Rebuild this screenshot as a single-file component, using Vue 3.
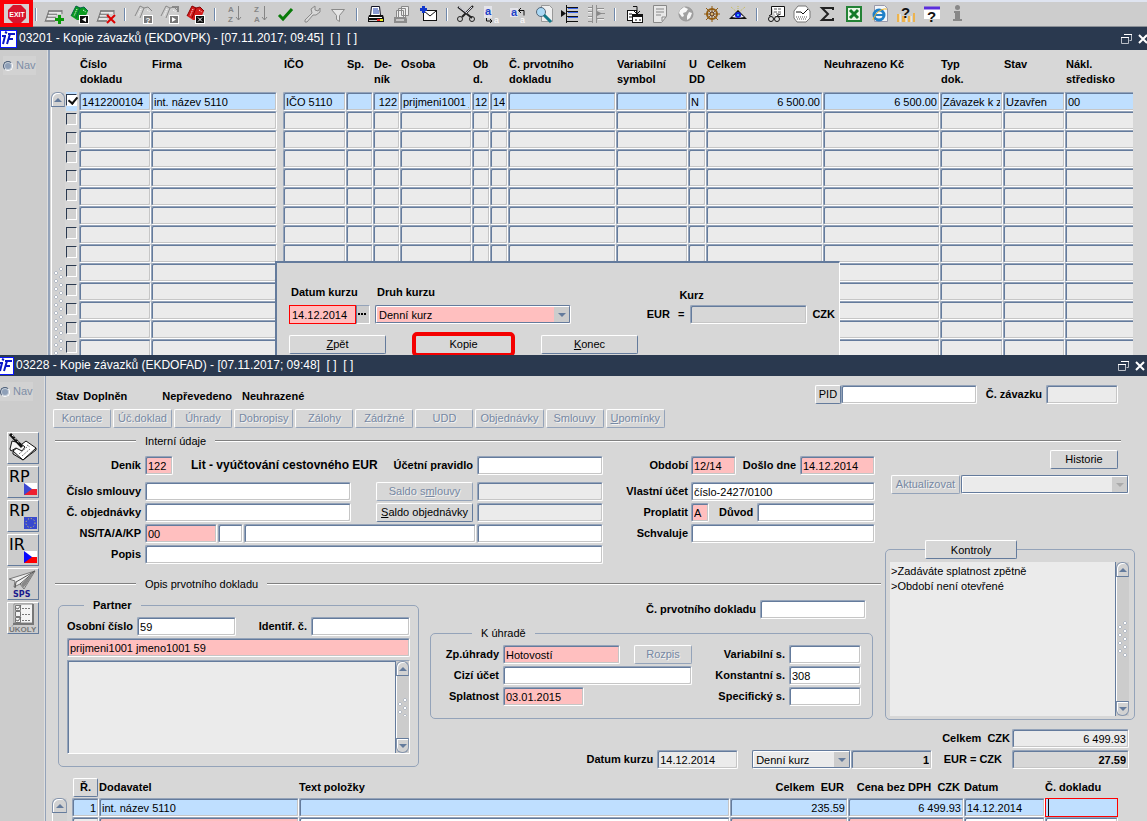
<script setup>
import { ref } from 'vue'

const sheet = '<path d="M5 7h13M4 10h9M3 13h9M2 17h9" stroke="#8a8a8a" stroke-width="2"/><path d="M5 9h12M4 12h8M3 15h8" stroke="#fff"/><path d="M5 6L1 18M18 6v4" stroke="#777" fill="none"/>'
const book = (fill, edge) => `<path d="M1 12L6 2l5 2 3-1 4 4-4 9H7z" fill="${fill}"/><path d="M1 12L6 2M6 2l4 2-4 10M10 4l4-1 4 4" stroke="${edge}" fill="none"/><path d="M7 5l-3 7M13 6l3 2" stroke="#fff" stroke-dasharray="1 1"/>`
const box = (fill, glyph) => `<rect x="9.500" y="11.500" width="9" height="8" fill="${fill}" stroke="#fff"/>${glyph}`
const toolGroups = [
  [
    ['Vložit záznam', sheet + '<path d="M15.500 11v9M11 15.500h9" stroke="#0a9a0a" stroke-width="3"/>'],
    ['Zadat dotaz', book('#0b9b20', '#064') + box('#111', '<path d="M16 13v5l-4-2.500z" fill="#fff"/>')],
    ['Smazat záznam', sheet + '<path d="M11 11l8 8M19 11l-8 8" stroke="#d00" stroke-width="2"/>']
  ],
  [
    ['Nápověda dotazu', book('#cfcfcf', '#888') + box('#777', '<text x="11.500" y="19" font-size="8" font-weight="bold" fill="#fff">?</text>')],
    ['Provést dotaz', book('#cfcfcf', '#888') + '<path d="M12 3h6v5" stroke="#888" stroke-width="2" fill="none"/>' + box('#777', '<path d="M12 13v5l4-2.500z" fill="#fff"/>')],
    ['Zrušit dotaz', book('#d31b1b', '#800') + box('#111', '<path d="M12 13.500l4 4M16 13.500l-4 4" stroke="#fff"/>')]
  ],
  [
    ['Seřadit vzestupně', '<g fill="#858585" font-size="8" font-weight="bold"><text x="4" y="8">A</text><text x="4" y="18">Z</text></g><path d="M14.500 2v14M12 13l2.500 3 2.500-3" stroke="#858585" fill="none"/>'],
    ['Seřadit sestupně', '<g fill="#858585" font-size="8" font-weight="bold"><text x="4" y="8">Z</text><text x="4" y="18">A</text></g><path d="M14.500 2v14M12 13l2.500 3 2.500-3" stroke="#858585" fill="none"/>'],
    ['Potvrdit', '<path d="M3 11l4 4 9-10" stroke="#087a08" stroke-width="3" fill="none"/>'],
    ['Nastavení', '<path d="M3 16l7-7-1-4 4-3 0 4 3 1 2-3 0 4-4 3-3-0-6 7-2 0z" stroke="#8a8a8a" fill="#d8d8d8"/>'],
    ['Filtr', '<path d="M3.500 5.500h13l-5 6v6l-3-2v-4z" stroke="#8a8a8a" fill="#e6e6e6"/>']
  ],
  [
    ['Tisk', '<path d="M5.500 2.500h8l1 9h-10z" fill="#fff" stroke="#112"/><path d="M7 5h5M7 7h6M7 9h6" stroke="#1838a8"/><path d="M3 11h14l1 3v4H2v-4z" fill="#111"/><path d="M3 13.500h13" stroke="#fff"/><path d="M3 16.500h8" stroke="#c9c9c9"/><path d="M11 16h3" stroke="#e22" stroke-width="2"/><path d="M14 16h3" stroke="#ee2" stroke-width="2"/>'],
    ['Tisk sestav', '<path d="M9.500 2.500h7v9h-7zM6.500 4.500h7v9h-7zM4.500 6.500h7v8h-7z" fill="#eee" stroke="#888"/><path d="M2 13h12l1 2v4H2z" fill="#8c8c8c"/><path d="M4 16h8" stroke="#fff"/>'],
    ['Odeslat poštou', '<rect x="5.500" y="6.500" width="13" height="10" fill="#fff" stroke="#111"/><path d="M6 7l6 5 6-5" stroke="#111" fill="none"/><path d="M5.500 2v7M2 5.500h7" stroke="#1238cc" stroke-width="3"/>']
  ],
  [
    ['Vyjmout', '<path d="M2 3l14 11M17 2L6 13" stroke="#222" stroke-width="2"/><path d="M3 3l8 6M16 3l-6 6" stroke="#dde"/><circle cx="4" cy="15" r="2.500" fill="none" stroke="#222"/><circle cx="16" cy="15" r="2.500" fill="none" stroke="#222"/>'],
    ['Kopírovat', '<path d="M2 2h8v12H2z" fill="#e4e4ea"/><text x="3" y="11" font-size="11" font-weight="bold" fill="#1f42c8">a</text><path d="M4.500 14v3h5M8 15l2 2-2 2" stroke="#111" fill="none"/><text x="12" y="19" font-size="9" fill="#fff">a</text>'],
    ['Vložit', '<path d="M2 4h8v9H2z" fill="#e4e4ea"/><text x="3" y="12" font-size="11" font-weight="bold" fill="#1f42c8">a</text><path d="M11 6.500h5v5M13 4l-2.500 2.500L13 9" stroke="#111" fill="none"/><text x="12" y="19" font-size="9" fill="#fff">a</text>'],
    ['Hledat', '<path d="M7.500 1.500h8l3 3v13h-11z" fill="#eee" stroke="#999"/><circle cx="7" cy="8" r="4.500" fill="#a9d8f5" stroke="#567"/><path d="M10 11l7 7" stroke="#178" stroke-width="3"/>'],
    ['Rozbalit seznam', '<path d="M6.500 1v18" stroke="#111"/><path d="M7 3.500h11M7 7.500h11M7 12.500h11M7 17.500h11" stroke="#111"/><path d="M8 4.500h10M8 8.500h10M8 13.500h10" stroke="#3a64e8"/><path d="M1 6l5 3.500-5 3.500z" fill="#111"/>'],
    ['Sbalit seznam', '<path d="M2 3.500h5M2 7.500h5M2 12.500h5M2 17.500h5M11 4.500h7M11 14.500h7M10.500 1v18M6.500 1v18M12 9.500h7" stroke="#909090"/><path d="M2 4.500h4M2 8.500h4M2 13.500h4M12 5.500h6M12 15.500h6" stroke="#eee"/><path d="M11 7l5 2.500-5 2.500z" fill="#888"/>']
  ],
  [
    ['Přehled', '<rect x="3.500" y="6.500" width="9" height="10" fill="#fff" stroke="#111"/><path d="M9 2.500h4v7M10 7l3 3 3-3" stroke="#111" fill="none"/><rect x="8.500" y="10.500" width="10" height="8" fill="#fff" stroke="#111"/><path d="M9 12h9" stroke="#111" stroke-width="2"/><path d="M5 10h3M5 13h3M11 16h2M15 16h2" stroke="#111"/>'],
    ['Poznámka', '<path d="M3.500 1.500h13v11l-5 6h-8z" fill="#e8e8e8" stroke="#888"/><path d="M6 5h8M6 8h8M6 11h5M16 13h-4v4" stroke="#888" fill="none"/>'],
    ['Internet', '<circle cx="10" cy="10" r="7" fill="#a2a2a2" stroke="#999"/><path d="M4 6l4-3 4 2-2 3-3 1 1 3-2 1-3-4zM13 8l3 1-2 5-3 2 0-4z" fill="#f8f8f8"/>'],
    ['Navigátor', '<circle cx="10" cy="10" r="5" fill="none" stroke="#925c12" stroke-width="2"/><path d="M10 2v16M2 10h16M4 4l12 12M16 4L4 16" stroke="#925c12"/><circle cx="10" cy="10" r="2" fill="#d7b36e" stroke="#532"/>'],
    ['Zobrazit', '<path d="M3 3l14 12M17 3L3 15M10 2v5" stroke="#c7b94b" stroke-dasharray="1 1"/><path d="M1 15l9-9 9 9z" fill="#111"/><path d="M4 13l6-5 6 5-6 1z" fill="#eef"/><circle cx="10" cy="11" r="3" fill="#0a1ed8"/><circle cx="10" cy="11" r="1" fill="#4df"/>']
  ],
  [
    ['Vyhledat doklad', '<path d="M5.500 2.500h13v10h-9M5.500 2.500v8" fill="#fff" stroke="#111"/><path d="M8 5h7M8 8h8M10 10h5" stroke="#555" stroke-dasharray="3 1"/><circle cx="5" cy="15" r="2.500" fill="#ddd" stroke="#111"/><circle cx="11" cy="15" r="2.500" fill="#ddd" stroke="#111"/><path d="M3 12l3-2M11 12l3-2" stroke="#111"/>'],
    ['Plán', '<path d="M6 2h8l4 5v7l-4 4H5l-3-4V7z" fill="#fff" stroke="#777"/><path d="M4 8h5l2 2 5-5" stroke="#111" fill="none"/><path d="M4 13h12M5 15h10" stroke="#555" stroke-dasharray="1 1"/>'],
    ['Součet', '<path d="M15 6V4H4l6 6-6 6h11v-2" stroke="#222" stroke-width="2" fill="none"/>'],
    ['Excel', '<rect x="2" y="2" width="16" height="16" fill="#238235"/><rect x="4" y="4" width="12" height="12" fill="#eaf6e6"/><path d="M6 6l8 8M14 6l-8 8" stroke="#137a27" stroke-width="3"/>'],
    ['Prohlížeč', '<path d="M4.500 1.500h10l3 3v13h-13z" fill="#f2f6fa" stroke="#99a"/><circle cx="9" cy="11" r="5" fill="none" stroke="#2080c8" stroke-width="3"/><path d="M5 11h9" stroke="#2080c8" stroke-width="2"/><path d="M3 16C4 11 10 4 17 5" stroke="#efb62c" fill="none"/>'],
    ['Uživatelská nápověda', '<path d="M1 10h3v8H1zM6 12h4v6H6zM12 12h3v6h-3zM17 9h2v9h-2z" fill="#ecb34e"/><path d="M4 10v8M10 12v6M15 12v6" stroke="#fff"/><text x="5" y="14" font-size="15" font-weight="bold" fill="#111">?</text>'],
    ['Nápověda', '<path d="M2 4h16v11H2z" fill="#fff"/><path d="M2 4h16" stroke="#5a2ddb" stroke-width="3"/><text x="5" y="18" font-size="15" font-weight="bold" fill="#111">?</text>'],
    ['Informace', '<circle cx="9.500" cy="3.500" r="2.500" fill="#888"/><path d="M6 7h6v8h2v2H5v-2h2V9H6z" fill="#888"/>']
  ]
]

const cols = [
  { t: 'Číslo\ndokladu', w: 72 }, { t: 'Firma', w: null }, { t: 'IČO', w: 69, gap: true }, { t: 'Sp.', w: 27 },
  { t: 'De-\nník', w: 27, num: true }, { t: 'Osoba', w: 72 }, { t: 'Ob\nd.', w: 18 }, { t: '', w: 18 },
  { t: 'Č. prvotního\ndokladu', w: 108 }, { t: 'Variabilní\nsymbol', w: 72 }, { t: 'U\nDD', w: 18 },
  { t: 'Celkem', w: 117, num: true }, { t: 'Neuhrazeno Kč', w: 117, num: true }, { t: 'Typ\ndok.', w: 63 },
  { t: 'Stav', w: 62 }, { t: 'Nákl.\nstředisko', w: 68 }
]
const firstRow = ['1412200104', 'int. název 5110', 'IČO 5110', '', '122', 'prijmeni1001 jmeno1001', '12', '14', '', '', 'N', '6 500.00', '6 500.00', 'Závazek k zaplacení', 'Uzavřen', '00']
const rows = ref(Array.from({ length: 14 }, (_, i) => ({ on: i === 0, cells: i === 0 ? firstRow : cols.map(() => '') })))

const tabs = [['', 'Kontace'], ['', 'Úč.doklad'], ['', 'Úhrady'], ['', 'Dobropisy'], ['', 'Zálohy'], ['', 'Zádržné'], ['', 'UDD'], ['', 'Objednávky'], ['', 'Smlouvy'], ['U', 'pomínky']]

const flag = (blue, red) => `<rect x="17" y="17" width="13" height="12" fill="#fff"/><path d="M17 23h13v6H17z" fill="${red}"/><path d="M17 17l8 6-8 6z" fill="${blue}"/>`
const big = t => `<text x="2" y="16" font-size="16" font-family="DejaVu Sans">${t}</text>`
const side = [
  { t: 'Poznámky', svg: '<path d="M6 19l13-10 10 7-13 12z" fill="#fff" stroke="#111"/><path d="M6 19v3l10 6M16 28l13-10v-2" stroke="#111" fill="none"/><path d="M3 17l2-8 8 2 5 4-3 4-6-3-5 3z" fill="#f4f4f4" stroke="#111"/><path d="M3 2l12 13" stroke="#111" stroke-width="3"/><path d="M5 3l8 9" stroke="#fff" stroke-dasharray="2 2"/><path d="M12 22l8-7M15 24l8-7M20 13l3 2" stroke="#777" stroke-dasharray="2 1"/>' },
  { t: 'RP CZ', svg: big('RP') + flag('#3c49d2', '#ee2030') },
  { t: 'RP EU', svg: big('RP') + '<rect x="17" y="17" width="13" height="12" fill="#3848cf"/><circle cx="23.500" cy="23" r="4.500" fill="none" stroke="#e8dc50" stroke-dasharray="1 2"/>' },
  { t: 'IR CZ', svg: big('IR') + flag('#0808ff', '#ff0000') },
  { t: 'SPS', svg: '<path d="M2 11L28 3 17 21l-4-5-6 3 1-6z" fill="#eee" stroke="#777"/><path d="M28 3L9 14l-1 6M28 3L13 16" stroke="#555" fill="none"/><path d="M14 16L28 3l-9 14-3 3z" fill="#888"/><text x="6" y="29" font-size="8" font-weight="bold" font-family="DejaVu Sans" fill="#1a1a8c">SPS</text>' },
  { t: 'Úkoly', svg: '<path d="M7 2h19v19H7z" fill="#f4f4f4" stroke="#888"/><path d="M26 2v20H6" stroke="#777" stroke-width="2" fill="none"/><path d="M8.500 3.500h5v5h-5zM8.500 9.500h5v5h-5zM8.500 15.500h5v5h-5z" fill="none" stroke="#777"/><path d="M9 6l2 1 3-4M9 18l2 1 3-4" stroke="#666" fill="none"/><path d="M15 6.500h9M15 12.500h9M15 18.500h9" stroke="#777" stroke-dasharray="2 1"/><text x="2" y="30" font-size="8" font-weight="bold" fill="#777">ÚKOLY</text>' }
]
const logo = '<rect x=".5" y=".5" width="16" height="17" fill="#fff" stroke="#0a16ff"/><path d="M2 6h4M5 6L3 14M5 2l2 1" stroke="#0a16c8" stroke-width="2" fill="none"/><path d="M8 4h7M10 4L7 14M8 9h5" stroke="#0a16c8" stroke-width="2" fill="none"/>'
const winIcons = '<path d="M3.500 1.500h7v6h-2M.5 4.500h7v6h-7z" stroke="#b9bec6" fill="none"/><path d="M3 1.500h8M0 4.500h8" stroke="#fff"/>'
const closeIcon = '<path d="M1 2l8 8M9 2l-8 8" stroke="#fff" stroke-width="2"/>'

const items = [
  { c: ['1', 'int. název 5110', '', '235.59', '6 499.93', '14.12.2014', ''], tone: ['blue', 'blue', 'blue', 'blue', 'blue', 'blue', 'current'] },
  { c: ['', '', '', '', '', '', ''], tone: ['grey', 'pink', '', 'pink', 'pink', '', ''] }
]
const itemCols = ['Řádek', 'Dodavatel', 'Text položky', 'Celkem EUR', 'Cena bez DPH CZK', 'Datum', 'Č. dokladu']
const checks = ref('>Zadáváte splatnost zpětně\n>Období není otevřené')
</script>

<template>
  <div class="app">
    <header class="toolbar">
      <button class="exit" aria-label="Exit">
        <svg width="20" height="20" viewBox="0 0 20 20"><path d="M6 1h8l5 5v8l-5 5H6l-5-5V6z" fill="#d8142c" /><text x="10" y="13" font-size="7" font-weight="bold" fill="#fff" text-anchor="middle">EXIT</text></svg>
      </button>
      <template v-for="(g, gi) in toolGroups" :key="gi">
        <span class="sep" />
        <button v-for="t in g" :key="t[0]" class="tool" :aria-label="t[0]">
          <svg width="20" height="20" viewBox="0 0 20 20" v-html="t[1]" />
        </button>
      </template>
    </header>

    <section class="window">
      <div class="titlebar">
        <svg class="logo" width="17" height="18" viewBox="0 0 17 18" v-html="logo" />
        <h1>03201 - Kopie závazků (EKDOVPK) - [07.11.2017; 09:45]&nbsp; [ ]&nbsp; [ ]</h1>
        <button class="win" aria-label="Obnovit"><svg width="12" height="12" viewBox="0 0 12 12" v-html="winIcons" /></button>
        <button class="win" aria-label="Zavřít"><svg width="12" height="12" viewBox="0 0 12 12" v-html="closeIcon" /></button>
      </div>
      <div class="body">
        <aside class="nav"><label class="radio"><input type="radio" name="nav1" disabled checked>Nav</label></aside>
        <main class="list">
          <div class="scroll open">
            <button class="arrow up" aria-label="Nahoru" />
            <span class="track"><span class="grip long" /></span>
          </div>
          <table class="grid">
            <colgroup>
              <col class="c0">
              <col v-for="(c, i) in cols" :key="i" :style="c.w ? { width: c.w + 'px' } : null">
            </colgroup>
            <thead>
              <tr><th /><th v-for="(c, i) in cols" :key="i" :class="{ gap: c.gap }">{{ c.t }}</th></tr>
            </thead>
            <tbody>
              <tr v-for="(r, ri) in rows" :key="ri" :class="{ sel: ri === 0 }">
                <td class="chk"><input v-model="r.on" type="checkbox" aria-label="Označit řádek"></td>
                <td v-for="(c, i) in cols" :key="i" :class="{ gap: c.gap }">
                  <input class="f" :class="{ num: c.num, blue: ri === 0, grey: ri > 0, cut: i === 15 }" :value="r.cells[i]" :aria-label="c.t || 'Období'">
                </td>
              </tr>
            </tbody>
          </table>

          <form class="dialog" @submit.prevent>
            <div class="dlg-fields">
              <div class="stack">
                <label for="dk">Datum kurzu</label>
                <div class="join">
                  <input id="dk" class="f pink active w-date" value="14.12.2014">
                  <button class="lov" aria-label="Vybrat datum"><svg width="11" height="15" viewBox="0 0 11 15"><path d="M1 6h2v2H1zM4 6h2v2H4zM7 6h2v2H7z" /></svg></button>
                </div>
              </div>
              <div class="stack">
                <label for="drk">Druh kurzu</label>
                <span class="select pink w-kind"><select id="drk"><option>Denní kurz</option></select><i /></span>
              </div>
              <div class="rate">
                <b>EUR</b><b>=</b>
                <div class="stack"><label for="kurz" class="lift">Kurz</label><input id="kurz" class="f flat w-117"></div>
                <b>CZK</b>
              </div>
            </div>
            <div class="dlg-buttons">
              <button class="btn"><u>Z</u>pět</button>
              <button class="btn marked">Kopie</button>
              <button class="btn"><u>K</u>onec</button>
            </div>
          </form>
        </main>
      </div>
    </section>

    <section class="window">
      <div class="titlebar low">
        <svg class="logo" width="17" height="18" viewBox="0 0 17 18" v-html="logo" />
        <h1>03228 - Kopie závazků (EKDOFAD) - [07.11.2017; 09:48]&nbsp; [ ]&nbsp; [ ]</h1>
        <button class="win" aria-label="Obnovit"><svg width="12" height="12" viewBox="0 0 12 12" v-html="winIcons" /></button>
        <button class="win" aria-label="Zavřít"><svg width="12" height="12" viewBox="0 0 12 12" v-html="closeIcon" /></button>
      </div>
      <div class="body">
        <aside class="nav low">
          <label class="radio"><input type="radio" name="nav2" disabled checked>Nav</label>
          <div class="side">
            <button v-for="s in side" :key="s.t" class="sbtn" :aria-label="s.t"><svg width="32" height="32" viewBox="0 0 32 32" v-html="s.svg" /></button>
          </div>
        </aside>
        <main class="detail">
          <div class="status">
            <div class="states"><b>Stav</b><b class="s2">Doplněn</b><b class="s3">Nepřevedeno</b><b>Neuhrazené</b></div>
            <button class="btn pid">PID</button>
            <input class="f w-pid" aria-label="PID">
            <label for="cz" class="czl">Č. závazku</label>
            <input id="cz" class="f grey w-72">
          </div>
          <nav class="tabs">
            <button v-for="t in tabs" :key="t[1]" class="btn" disabled><u>{{ t[0] }}</u>{{ t[1] }}</button>
          </nav>
          <div class="rule wide"><span>Interní údaje</span></div>

          <div class="panels">
            <div class="form">
              <div class="forms">
                <div class="left">
                  <div class="row first">
                    <label for="denik">Deník</label><input id="denik" class="f pink w-28" value="122">
                    <b class="lit">Lit - vyúčtování cestovného EUR</b>
                    <label for="up" class="push">Účetní pravidlo</label><input id="up" class="f w-126">
                  </div>
                  <div class="row">
                    <label for="cs">Číslo smlouvy</label><input id="cs" class="f w-206">
                    <button class="btn push" disabled>Saldo s<u>m</u>louvy</button><input class="f grey w-126" aria-label="Saldo smlouvy">
                  </div>
                  <div class="row">
                    <label for="co">Č. objednávky</label><input id="co" class="f w-206">
                    <button class="btn push"><u>S</u>aldo objednávky</button><input class="f grey w-126" aria-label="Saldo objednávky">
                  </div>
                  <div class="row tight">
                    <label for="ns">NS/TA/A/KP</label><input id="ns" class="f pink w-72" value="00">
                    <input class="f w-25" aria-label="TA"><input class="f grow" aria-label="A"><input class="f w-126" aria-label="KP">
                  </div>
                  <div class="row"><label for="popis">Popis</label><input id="popis" class="f grow"></div>
                </div>
                <div class="mid">
                  <div class="row first">
                    <label for="obd">Období</label><input id="obd" class="f pink w-45" value="12/14">
                    <label for="dd" class="push">Došlo dne</label><input id="dd" class="f pink w-75" value="14.12.2014">
                  </div>
                  <div class="row"><label for="vu">Vlastní účet</label><input id="vu" class="f grow" value="číslo-2427/0100"></div>
                  <div class="row">
                    <label for="pr">Proplatit</label><input id="pr" class="f pink w-18" value="A">
                    <label for="du" class="reason">Důvod</label><input id="du" class="f grow">
                  </div>
                  <div class="row"><label for="sch">Schvaluje</label><input id="sch" class="f grow"></div>
                </div>
              </div>
              <div class="rule"><span>Opis prvotního dokladu</span></div>
            </div>

            <div class="right">
              <button class="btn hist">Historie</button>
              <div class="update">
                <button class="btn" disabled>Aktualizovat</button>
                <span class="select off grow"><select disabled aria-label="Aktualizovat"><option /></select><i /></span>
              </div>
              <fieldset class="box checks">
                <legend><button class="btn">Kontroly</button></legend>
                <div class="area">
                  <textarea v-model="checks" readonly aria-label="Kontroly" />
                  <div class="scroll"><button class="arrow up" aria-label="Nahoru" /><span class="track"><span class="grip" /></span><button class="arrow down" aria-label="Dolů" /></div>
                </div>
              </fieldset>
            </div>

            <fieldset class="box partner">
              <legend class="strong">Partner</legend>
              <div class="prow">
                <label for="oc">Osobní číslo</label><input id="oc" class="f w-99" value="59">
                <label for="ic" class="push">Identif. č.</label><input id="ic" class="f w-99">
              </div>
              <input class="f pink full" value="prijmeni1001 jmeno1001 59" aria-label="Jméno partnera">
              <div class="area framed">
                <textarea aria-label="Adresa partnera" />
                <div class="scroll"><button class="arrow up" aria-label="Nahoru" /><span class="track"><span class="grip short" /></span><button class="arrow down" aria-label="Dolů" /></div>
              </div>
            </fieldset>

            <div class="pay">
              <div class="row docno"><label for="cpd">Č. prvotního dokladu</label><input id="cpd" class="f w-106"></div>
              <fieldset class="box payment">
                <legend>K úhradě</legend>
                <div class="cols">
                  <div class="pcol">
                    <div class="row"><label for="zu">Zp.úhrady</label><input id="zu" class="f pink w-117" value="Hotovostí"><button class="btn push w-58" disabled>Rozpis</button></div>
                    <div class="row"><label for="cu">Cizí účet</label><input id="cu" class="f grow"></div>
                    <div class="row"><label for="sp">Splatnost</label><input id="sp" class="f pink w-81" value="03.01.2015"></div>
                  </div>
                  <div class="pcol end">
                    <div class="row"><label for="vs">Variabilní s.</label><input id="vs" class="f w-72"></div>
                    <div class="row"><label for="ks">Konstantní s.</label><input id="ks" class="f w-72" value="308"></div>
                    <div class="row"><label for="ss">Specifický s.</label><input id="ss" class="f w-72"></div>
                  </div>
                </div>
              </fieldset>
            </div>

            <div class="totals">
              <div class="ratebar">
                <label for="dk2">Datum kurzu</label><input id="dk2" class="f grey w-81" value="14.12.2014">
                <span class="select w-99"><select aria-label="Druh kurzu"><option>Denní kurz</option></select><i /></span>
                <input class="f flat num strong w-81" value="1" aria-label="Kurz">
              </div>
              <div class="sums">
                <div class="row"><label for="cc">Celkem&nbsp; CZK</label><input id="cc" class="f grey num w-117" value="6 499.93"></div>
                <div class="row"><label for="ec" class="ec">EUR = CZK</label><input id="ec" class="f flat num strong w-117" value="27.59"></div>
              </div>
            </div>
          </div>

          <div class="items">
            <div class="scroll open"><button class="arrow up" aria-label="Nahoru" /><span class="track" /></div>
            <table class="grid">
              <colgroup><col class="c1"><col class="c2"><col><col class="c4"><col class="c5"><col class="c6"><col class="c7"></colgroup>
              <thead>
                <tr>
                  <th><button class="btn rb">Ř.</button></th><th>Dodavatel</th><th>Text položky</th>
                  <th class="r">Celkem&nbsp; EUR</th><th class="r">Cena bez DPH&nbsp; CZK</th><th>Datum</th><th>Č. dokladu</th>
                </tr>
              </thead>
              <tbody>
                <tr v-for="(r, ri) in items" :key="ri">
                  <td v-for="(v, i) in r.c" :key="i">
                    <input class="f" :class="[r.tone[i], { num: i === 0 || i === 3 || i === 4 }]" :value="v" :aria-label="itemCols[i]">
                  </td>
                </tr>
              </tbody>
            </table>
          </div>
        </main>
      </div>
    </section>
  </div>
</template>

<style>
html, body { margin: 0; background: #d7d7d7; }
</style>

<style scoped>
.app, .app * { box-sizing: border-box; }
.app {
  display: grid;
  grid-template-rows: auto minmax(0, 328fr) minmax(0, 466fr);
  height: 100vh;
  overflow: hidden;
  background: #d7d7d7;
  color: #000;
  font: 11px/15px "Liberation Sans", Arial, sans-serif;
}
button, input, select, textarea { font: inherit; color: inherit; margin: 0; border-radius: 0; outline: none; }
button { padding: 0; border: 0; background: none; }
label, b { font-weight: bold; white-space: nowrap; }
svg { display: block; font-family: "Liberation Sans", Arial, sans-serif; }
u { text-underline-offset: 1px; }

.toolbar { display: flex; align-items: stretch; height: 27px; background: #cdcdcd; border-top: 2px solid #dfe4f0; box-shadow: inset 0 -1px #8a8f96; }
.exit { display: flex; align-items: center; justify-content: center; width: 33px; height: 27px; margin-top: -2px; border: 4px solid #fb0007; background: #d8cfd0; }
.tool { display: flex; align-items: center; justify-content: center; width: 26px; height: 24px; }
.sep { width: 12px; display: flex; align-items: center; justify-content: center; }
.sep::before { content: ""; width: 1px; height: 13px; border-left: 1px solid #6f88ab; background: #fff; }
.exit + .sep { width: 8px; padding-right: 2px; }

.window { display: flex; flex-direction: column; min-height: 0; overflow: hidden; }
.titlebar { display: flex; align-items: center; flex: none; height: 23px; background: #2a394f; color: #fff; }
.titlebar.low { height: 21px; }
.titlebar h1 { flex: 1; margin: 0 0 0 2px; font-size: 12px; font-weight: normal; white-space: nowrap; }
.logo { flex: none; }
.titlebar.low .logo { margin-left: -3px; }
.win { width: 17px; }
.win:last-child { margin-right: -8px; }
.titlebar.low .win:last-child { margin-right: -5px; }
.body { display: flex; flex: 1; min-height: 0; }
.nav { flex: none; width: 50px; padding: 6px 0 0 3px; background: #ccc; border-right: 2px solid #94a3b9; box-shadow: inset -1px 0 #dedede; }
.nav.low { width: 46px; padding-left: 0; border-right-width: 1px; }
.radio { display: flex; align-items: center; width: 33px; height: 19px; gap: 3px; background: #d2d2d2; color: #7e8ea6; font-weight: normal; }
.radio input { appearance: none; flex: none; width: 10px; height: 10px; border: 1px solid #4d5f79; border-right-color: #fff; border-bottom-color: #fff; border-radius: 50%; background: #8fa0b8; box-shadow: inset 0 0 0 1px #c9d0d9; }
.side { display: grid; gap: 2px; padding: 31px 0 0 7px; }
.sbtn { width: 32px; height: 32px; border: 1px solid #fff; border-right-color: #647b9c; border-bottom-color: #647b9c; }
.sbtn svg { margin: -1px; }

.f { display: block; min-width: 0; height: 19px; padding: 0 2px; border: 1px solid #fff; border-top-color: #94a3b9; border-left-color: #94a3b9; border-radius: 2px; background: #fff; box-shadow: inset 1px 1px #647b9c, inset -1px -1px #c6c6c6; }
.f.grey { background: #ebebeb; }
.f.blue { background: #bfdfff; }
.f.pink { background: #ffbfbf; }
.f.flat { background: #d7d7d7; }
.f.num { text-align: right; }
.f.strong { font-weight: bold; }
.f.active { border-color: #f00; border-radius: 0; box-shadow: none; }
.f.current { border: 1px solid #f00; border-radius: 0; box-shadow: inset 2px 0 #bfdfff, inset 3px 0 #111; background: #bfdfff; }
.f.cut { border-right: 0; border-radius: 0; box-shadow: inset 1px 1px #647b9c, inset 0 -1px #c6c6c6; }
.grow { flex: 1; }
.full { width: 100%; }

.btn { height: 19px; padding: 0 3px; border: 1px solid #fff; border-right-color: #647b9c; border-bottom-color: #647b9c; border-radius: 2px; background: #d7d7d7; text-align: center; white-space: nowrap; }
.btn:disabled { color: #7688a3; border-right-color: #94a3b9; border-bottom-color: #94a3b9; text-shadow: 1px 1px #f2f2f2; }

.select { position: relative; display: block; height: 19px; border: 1px solid #647b9c; border-right-color: #fff; border-bottom-color: #fff; border-radius: 2px; background: #ebebeb; box-shadow: inset -1px -1px #647b9c, inset 1px 1px #fff; }
.select.pink { background: #ffbfbf; }
.select select { appearance: none; display: block; width: 100%; height: 100%; padding: 1px 16px 0 3px; border: 0; background: none; opacity: 1; }
.select i { position: absolute; top: 1px; right: 1px; bottom: 1px; width: 15px; background: #ccc; pointer-events: none; }
.select i::after { content: ""; position: absolute; top: 6px; left: 4px; border: 4px solid transparent; border-top-color: #647b9c; border-bottom: 0; }
.select.off i::after { border-top-color: #aaa; }

.scroll { display: flex; flex-direction: column; flex: none; width: 14px; background: #ccc; border-left: 1px solid #647b9c; }
.arrow { flex: none; height: 15px; border: 1px solid #8595ad; background: #d2d2d2; box-shadow: inset 1px 1px #fff; }
.arrow.up { border-radius: 6px 6px 0 0; border-bottom-color: #647b9c; }
.arrow.down { border-radius: 0 0 6px 6px; border-top-color: #647b9c; }
.arrow::after { content: ""; display: block; width: 0; margin: 0 auto; border: 4px solid transparent; }
.arrow.up::after { border-bottom-color: #647b9c; border-top: 0; }
.arrow.down::after { border-top-color: #647b9c; border-bottom: 0; }
.track { flex: 1; display: flex; align-items: center; justify-content: center; min-height: 0; border-left: 1px solid #fff; }
.grip { width: 10px; height: 36px; background: radial-gradient(circle at 2px 6px, #fff 1px, #b4bbc6 1px 2px, transparent 2px) 0 0 / 10px 8px, radial-gradient(circle at 7px 2px, #fff 1px, #b4bbc6 1px 2px, transparent 2px) 0 0 / 10px 8px; }
.grip.short { height: 18px; }
.scroll.open { border-left: 0; background: #d2d2d2; }
.grip.long { align-self: flex-end; height: 88px; }

.list { position: relative; display: flex; flex: 1; min-width: 0; align-items: flex-start; padding: 0 14px 0 1px; }
.list > .scroll { align-self: stretch; margin-top: 42px; }
.grid { flex: 1; width: 0; border-collapse: collapse; table-layout: fixed; }
.grid th { height: 42px; padding: 7px 0 5px 1px; text-align: left; vertical-align: top; white-space: pre; font-weight: bold; }
.grid td { height: 19px; padding: 0; }
.grid .f { width: 100%; }
.grid th.gap { padding-left: 7px; }
.grid td.gap { padding-left: 6px; }
.chk { vertical-align: top; }
.chk input { appearance: none; display: block; width: 11px; height: 12px; margin: 2px 0 0 1px; border: 1px solid #2a394f; border-right-color: #fff; border-bottom-color: #fff; background: #d2d2d2; }
.chk input:checked { background: #fff; }
.chk input:checked::after { content: ""; display: block; width: 4px; height: 7px; margin: 0 0 0 3px; border: solid #111; border-width: 0 2px 2px 0; transform: rotate(40deg); }
.sel .chk { background: linear-gradient(90deg, #d7d7d7 1px, #bfdfff 1px 12px, #d7d7d7 12px); }

.dialog { position: absolute; top: 211px; left: 225px; bottom: 0; width: 565px; padding: 20px 3px 0 12px; background: #d7d7d7; border: 1px solid #fff; border-top: 2px solid #647b9c; border-left: 2px solid #647b9c; border-bottom: 0; }
.dlg-fields { display: flex; align-items: flex-end; gap: 5px; height: 41px; }
.stack { display: grid; gap: 5px; }
.stack > label { padding-left: 2px; }
.stack > .lift { margin: 0 0 -3px -13px; }
.join { display: flex; }
.lov { width: 14px; border: 1px solid #fff; border-top-color: #94a3b9; border-left-color: #647b9c; background: #ccc; }
.rate { display: flex; align-items: flex-end; gap: 5px; margin-left: auto; }
.rate > b { line-height: 19px; margin-right: 1px; }
.rate > b:first-child { margin-right: 3px; }
.dlg-buttons { display: flex; gap: 29px; padding-top: 11px; }
.dlg-buttons .btn { width: 97px; }
.marked { outline: 4px solid #f40000; outline-offset: -1px; }
.w-date { width: 67px; }
.w-kind { width: 196px; }

.detail { flex: 1; min-width: 0; padding-top: 9px; }
.status { display: flex; align-items: center; padding: 0 29px 0 10px; }
.states { display: flex; flex: 1; padding-top: 4px; }
.s2 { margin-left: 4px; }
.s3 { margin: 0 10px 0 35px; }
.pid { width: 26px; }
.w-pid { width: 136px; }
.czl { margin: 0 4px 0 9px; }
.tabs { display: flex; gap: 2px; width: 612px; margin: 5px 0 0 7px; }
.tabs .btn { flex: 1 0 auto; min-width: 58px; }
.rule { display: flex; align-items: center; gap: 9px; height: 14px; margin: 13px 0 0 9px; white-space: nowrap; }
.rule::before, .rule::after { content: ""; height: 1px; background: #808080; border-bottom: 1px solid #fff; }
.rule::before { width: 81px; }
.rule::after { flex: 1; }
.rule.wide { margin: 6px 26px 0 9px; }

.panels { display: grid; grid-template: "form form right" auto "partner pay right" 129px "partner totals totals" auto / 373px minmax(0, 1fr) 250px; padding: 2px 12px 0 0; }
.form { grid-area: form; padding: 6px 4px 0 0; }
.forms { display: flex; padding-right: 6px; }
.left, .mid { display: grid; grid-template-columns: minmax(0, 1fr); gap: 2px; align-content: start; }
.left { flex: 1; min-width: 0; }
.mid { flex: none; width: 272px; }
.row { display: flex; align-items: center; gap: 4px; height: 19px; }
.row.first { margin-bottom: 5px; }
.row label { text-align: right; }
.left .row > label:first-child { width: 95px; }
.mid .row > label:first-child { width: 85px; margin-right: -1px; }
.row.tight { gap: 1px; }
.row.tight label { margin-right: 3px; }
.push { margin-left: auto; }
.left .btn { width: 97px; }
.lit { margin-left: 14px; font-size: 12px; }
.reason { margin-left: 6px; }
.w-18 { width: 18px; }
.w-25 { width: 25px; }
.w-28 { width: 28px; }
.w-45 { width: 45px; }
.w-58 { width: 58px; }
.w-72 { width: 72px; }
.w-75 { width: 75px; }
.w-81 { width: 81px; }
.w-99 { width: 99px; }
.w-106 { width: 106px; }
.w-117 { width: 117px; }
.w-126 { width: 126px; }
.w-206 { width: 206px; }

.right { grid-area: right; display: flex; flex-direction: column; }
.hist { align-self: flex-end; width: 68px; margin-right: 17px; }
.update { display: flex; gap: 1px; margin: 6px 6px 0; }
.update .btn { width: 69px; }
.box { min-width: 0; margin: 0; padding: 0; border: 1px solid #94a3b9; border-radius: 5px; }
.box legend { height: 12px; line-height: 12px; padding: 0 9px; }
.strong { font-weight: bold; }
.checks { display: flex; flex: 1; margin-top: 46px; padding: 3px 5px 3px 4px; }
.box.checks legend { height: 19px; margin-left: 35px; padding: 0; }
.checks .btn { display: block; width: 92px; }
.area { display: flex; flex: 1; min-width: 0; background: #ebebeb; }
.area textarea { flex: 1; min-width: 0; resize: none; padding: 2px 1px; border: 0; background: none; overflow: hidden; }
.area.framed { height: 94px; border: 1px solid #fff; border-top-color: #94a3b9; border-left-color: #94a3b9; box-shadow: inset 1px 1px #647b9c; }

.partner { grid-area: partner; margin: 8px 0 2px 12px; padding: 6px 8px 0; }
.partner legend { margin-left: 17px; }
.prow { display: flex; align-items: center; gap: 4px; margin-bottom: 2px; }
.partner .full { margin-bottom: 3px; }
.pay { grid-area: pay; padding: 9px 12px 0 11px; }
.docno { justify-content: flex-end; padding-right: 7px; }
.payment { margin-top: 8px; padding: 6px 11px 12px 12px; }
.payment legend { margin-left: 29px; }
.cols { display: flex; justify-content: space-between; }
.pcol { display: grid; gap: 2px; width: 249px; }
.pcol .row label { width: 56px; }
.pcol.end { width: auto; }
.pcol.end .row label { width: auto; margin-left: auto; }
.totals { grid-area: totals; display: flex; justify-content: flex-end; align-items: flex-end; padding: 9px 6px 0 0; }
.ratebar { display: flex; align-items: center; gap: 4px; margin-right: 10px; }
.ratebar .select { margin: 0 -4px 0 10px; }
.sums { display: grid; gap: 2px; }
.sums .row { justify-content: flex-end; gap: 2px; }
.ec { margin-right: 8px; }

.items { display: flex; padding: 9px 29px 0 6px; }
.items .scroll { width: 15px; margin: 20px 5px 0 0; }
.items .grid th { height: 20px; padding: 2px 0 0; }
.items .grid th.r { text-align: right; padding-right: 4px; }
.items .grid th:first-child { padding: 0 0 1px 1px; }
.rb { display: block; width: 25px; font-weight: bold; }
.c0 { width: 14px; }
.c1 { width: 27px; }
.c2 { width: 200px; }
.c4 { width: 118px; }
.c5 { width: 116px; }
.c6 { width: 81px; }
.c7 { width: 73px; }
</style>
